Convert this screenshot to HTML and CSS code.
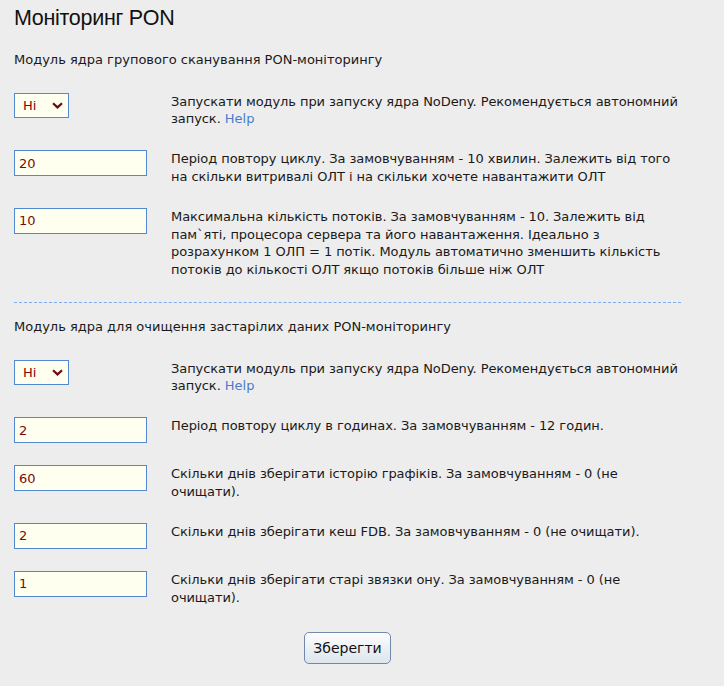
FILE: index.html
```html
<!DOCTYPE html>
<html lang="uk">
<head>
<meta charset="utf-8">
<title>Моніторинг PON</title>
<link rel="stylesheet" href="styles.css">
</head>
<body>
<div class="page">
  <h1 class="title">Моніторинг PON</h1>

  <section class="group">
    <div class="group-title">Модуль ядра групового сканування PON-моніторингу</div>
    <div class="row">
      <div class="ctrl">
        <span class="select-wrap">
          <select class="select"><option>Ні</option><option>Так</option></select>
          <svg class="chev" width="11" height="7" viewBox="0 0 11 7"><path d="M1 1.2 L5.5 5.4 L10 1.2" fill="none" stroke="#6b0c0c" stroke-width="2.2"/></svg>
        </span>
      </div>
      <div class="desc">Запускати модуль при запуску ядра NoDeny. Рекомендується автономний запуск. <a class="help" href="#">Help</a></div>
    </div>
    <div class="row">
      <div class="ctrl"><input class="input" type="text" value="20"></div>
      <div class="desc">Період повтору циклу. За замовчуванням - 10 хвилин. Залежить від того на скільки витривалі ОЛТ і на скільки хочете навантажити ОЛТ</div>
    </div>
    <div class="row">
      <div class="ctrl"><input class="input" type="text" value="10"></div>
      <div class="desc">Максимальна кількість потоків. За замовчуванням - 10. Залежить від пам`яті, процесора сервера та його навантаження. Ідеально з розрахунком 1 ОЛП = 1 потік. Модуль автоматично зменшить кількість потоків до кількості ОЛТ якщо потоків більше ніж ОЛТ</div>
    </div>
  </section>

  <hr class="sep">

  <section class="group">
    <div class="group-title">Модуль ядра для очищення застарілих даних PON-моніторингу</div>
    <div class="row">
      <div class="ctrl">
        <span class="select-wrap">
          <select class="select"><option>Ні</option><option>Так</option></select>
          <svg class="chev" width="11" height="7" viewBox="0 0 11 7"><path d="M1 1.2 L5.5 5.4 L10 1.2" fill="none" stroke="#6b0c0c" stroke-width="2.2"/></svg>
        </span>
      </div>
      <div class="desc">Запускати модуль при запуску ядра NoDeny. Рекомендується автономний запуск. <a class="help" href="#">Help</a></div>
    </div>
    <div class="row">
      <div class="ctrl"><input class="input" type="text" value="2"></div>
      <div class="desc">Період повтору циклу в годинах. За замовчуванням - 12 годин.</div>
    </div>
    <div class="row">
      <div class="ctrl"><input class="input" type="text" value="60"></div>
      <div class="desc">Скільки днів зберігати історію графіків. За замовчуванням - 0 (не очищати).</div>
    </div>
    <div class="row">
      <div class="ctrl"><input class="input" type="text" value="2"></div>
      <div class="desc">Скільки днів зберігати кеш FDB. За замовчуванням - 0 (не очищати).</div>
    </div>
    <div class="row">
      <div class="ctrl"><input class="input" type="text" value="1"></div>
      <div class="desc">Скільки днів зберігати старі звязки ону. За замовчуванням - 0 (не очищати).</div>
    </div>
  </section>

  <div class="actions"><button class="btn" type="button">Зберегти</button></div>
</div>
</body>
</html>
```

FILE: styles.css
```css
html, body {
  margin: 0;
  padding: 0;
  background: #ededed;
}
body {
  font-family: "DejaVu Sans", Verdana, sans-serif;
  font-size: 13px;
  line-height: 17.67px;
  color: #1a1a1a;
}
.page {
  width: 667px;
  margin-left: 14px;
}
.title {
  margin: 0 0 18px;
  padding-top: 3px;
  font-family: "Liberation Sans", Arial, sans-serif;
  font-size: 21.5px;
  letter-spacing: -0.3px;
  line-height: 30px;
  font-weight: normal;
  color: #111;
}
.group-title {
  margin: 0 0 13px;
}
.row {
  display: grid;
  grid-template-columns: 157px 1fr;
  align-items: start;
  padding: 11px 0;
}
.ctrl {
  display: flex;
}
.desc {
  padding-bottom: 0.3px;
  letter-spacing: -0.07px;
}
.help {
  color: #4a7ccc;
  text-decoration: none;
  letter-spacing: 0;
}
.input {
  box-sizing: border-box;
  width: 133px;
  height: 26px;
  margin: 0;
  padding: 0 4px;
  border: 1px solid #5389d0;
  background: #ffffef;
  color: #7a0a0a;
  font-family: "DejaVu Sans", Verdana, sans-serif;
  font-size: 13px;
  outline: none;
}
.select-wrap {
  position: relative;
  display: inline-block;
}
.select {
  -webkit-appearance: none;
  appearance: none;
  box-sizing: border-box;
  width: 55px;
  height: 25px;
  margin: 0;
  padding: 0 0 0 8px;
  border: 1px solid #5389d0;
  border-radius: 0;
  background: #ffffef;
  color: #7a0a0a;
  font-family: "DejaVu Sans", Verdana, sans-serif;
  font-size: 13px;
}
.chev {
  position: absolute;
  left: 38px;
  top: 9px;
  pointer-events: none;
}
.sep {
  margin: 12px 0 15px;
  height: 0;
  border: 0;
  border-top: 1px dashed #7aaef0;
}
.actions {
  display: flex;
  justify-content: center;
  padding-top: 14.5px;
}
.btn {
  box-sizing: border-box;
  width: 87px;
  height: 32px;
  margin: 0;
  border: 1px solid #7088aa;
  border-radius: 5px;
  background: linear-gradient(#fdfdfd, #e9eef4 60%, #dde5ee);
  color: #111;
  font-family: "DejaVu Sans", Verdana, sans-serif;
  font-size: 14px;
}
```
